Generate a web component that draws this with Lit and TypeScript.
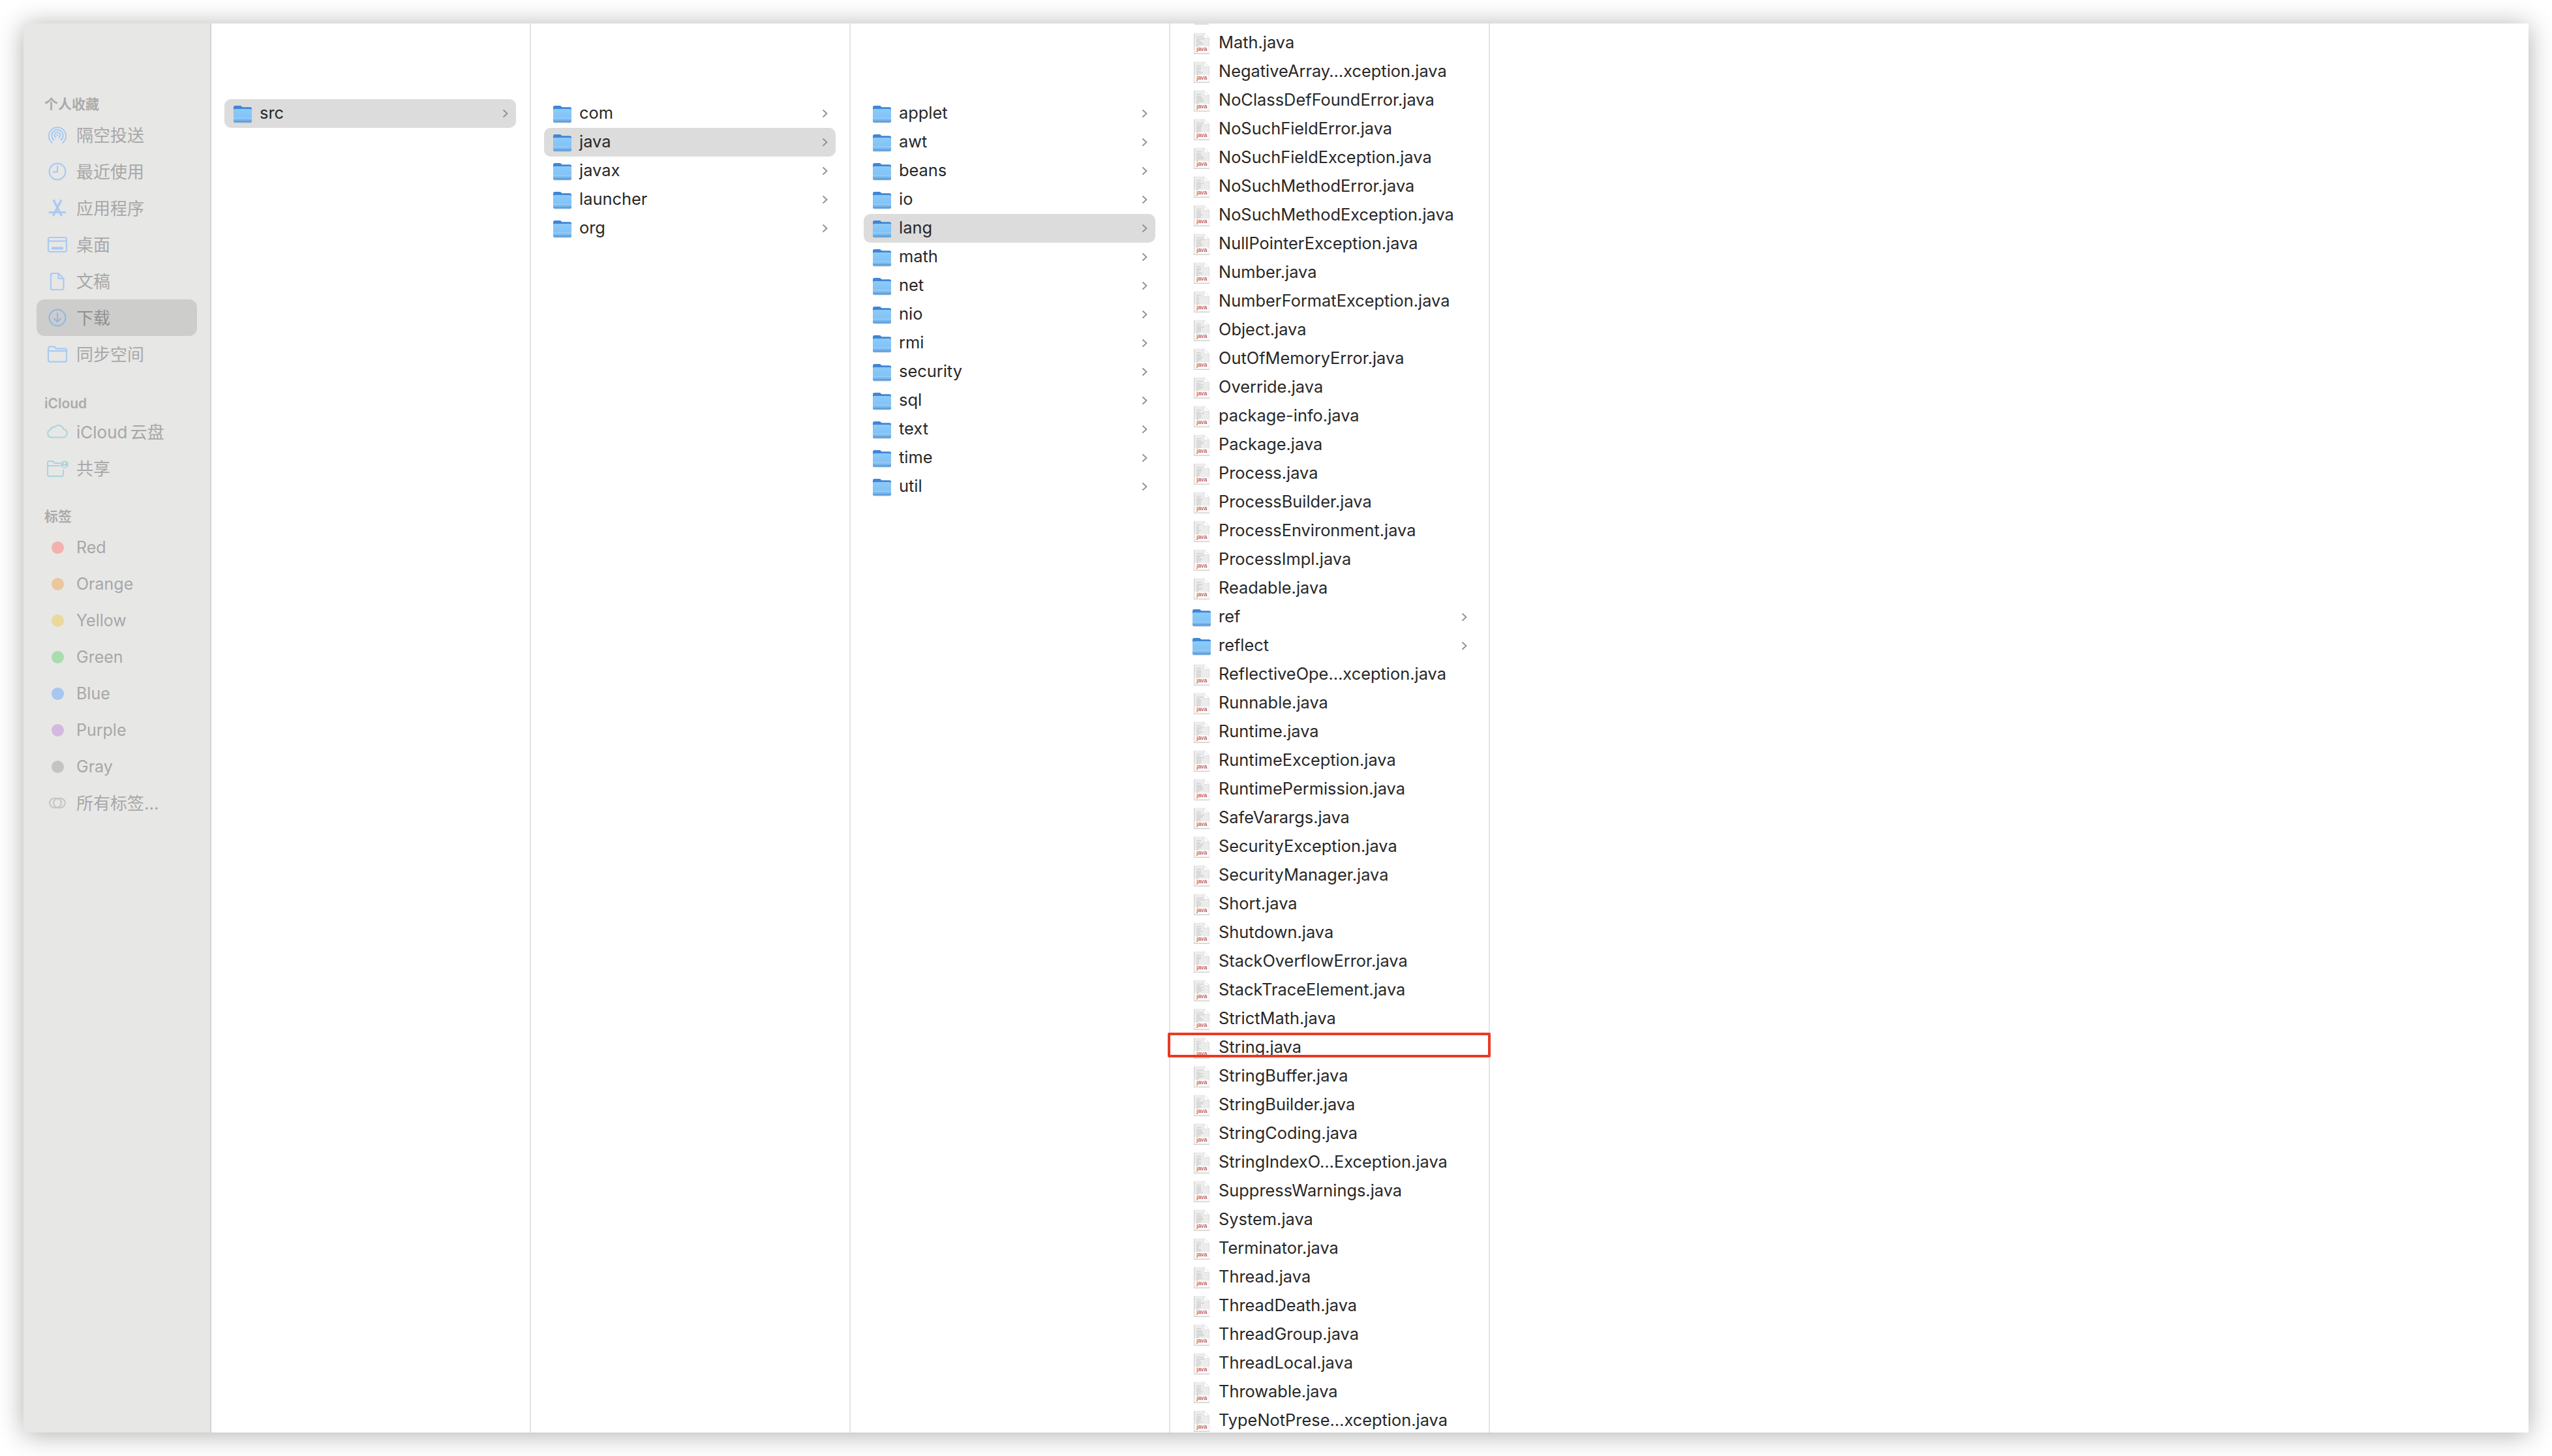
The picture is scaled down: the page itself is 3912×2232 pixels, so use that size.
import { LitElement, html, css, svg } from "lit";
import { customElement } from "lit/decorators.js";

const blue = "#a9caf2";
const teal = "#a9d3df";

const sideIcons: Record<string, unknown> = {
  airdrop: svg`<g fill="none" stroke="currentColor" stroke-linecap="round">
    <path stroke-width="2" d="M10 27 A13.2 13.2 0 1 1 26 27"/>
    <path stroke-width="2" d="M12.6 22.6 A8.7 8.7 0 1 1 23.4 22.6"/>
    <path stroke-width="2" d="M15.4 18.6 A4.4 4.4 0 1 1 20.6 18.6"/>
    <circle cx="18" cy="15" r="1.5" fill="currentColor" stroke="none"/></g>`,
  clock: svg`<g fill="none" stroke="currentColor" stroke-width="2.2" stroke-linecap="round"><circle cx="18" cy="15" r="12.4"/><path d="M18 7v8.6h-6.4"/></g>`,
  apps: svg`<g fill="none" stroke="currentColor" stroke-linecap="round"><path stroke-width="3.4" d="M12.5 3.5 24 26M23.5 3.5 12 26"/><path stroke-width="3" d="M6 21.5h24"/></g>`,
  desktop: svg`<g fill="none" stroke="currentColor"><rect x="4" y="4" width="28" height="22" rx="3" stroke-width="2.2"/><path stroke-width="2.2" d="M4 9.5h28"/></g><rect x="9" y="18.5" width="18" height="4" rx="1" fill="currentColor"/>`,
  doc: svg`<g fill="none" stroke="currentColor" stroke-width="2.2" stroke-linejoin="round"><path d="M8 5a2 2 0 0 1 2-2h9.500l8 8V26a2 2 0 0 1-2 2H10a2 2 0 0 1-2-2z" /><path d="M19.500 3v8h8"/></g>`,
  download: svg`<g fill="none" stroke="currentColor" stroke-width="2.2" stroke-linecap="round" stroke-linejoin="round"><circle cx="18" cy="15" r="12.4"/><path d="M18 8v13M13 16.5l5 5 5-5"/></g>`,
  folder: svg`<g fill="none" stroke="currentColor" stroke-width="2.2" stroke-linejoin="round"><path d="M4 6a2.6 2.6 0 0 1 2.6-2.6h6.6l3 3h13.2A2.6 2.6 0 0 1 32 9v15a2.6 2.6 0 0 1-2.6 2.6H6.6A2.6 2.6 0 0 1 4 24z"/><path d="M4 10h28"/></g>`,
  cloud: svg`<path fill="none" stroke="currentColor" stroke-width="2" d="M9 25.5a6 6 0 0 1-1.600-11.700 A6.500 6.500 0 0 1 14 9.500 A8 8 0 0 1 27.500 13 A6.300 6.300 0 0 1 27 25.500z" transform="translate(0 -2)"/>`,
  shared: svg`<g fill="none" stroke="currentColor" stroke-width="2" stroke-linejoin="round"><path d="M27 17v8a2 2 0 0 1-2 2H5a2 2 0 0 1-2-2V6a2 2 0 0 1 2-2h6l3 3h9"/><path d="M3 11h19"/></g><circle cx="29" cy="9" r="5.800" fill="currentColor"/><circle cx="29" cy="7" r="1.800" fill="#e7e7e6"/><path d="M25.800 13a3.300 3.300 0 0 1 6.400 0z" fill="#e7e7e6"/>`,
  tags: svg`<g fill="none" stroke="#c6c6c6" stroke-width="2.2"><ellipse cx="15" cy="15" rx="9" ry="7.500" /><ellipse cx="21" cy="15" rx="9" ry="7.500"/></g>`,
};

const folderIcon = html`<svg class="ico" width="30" height="30" viewBox="0 0 30 30">
  <defs>
    <linearGradient id="fb" x1="0" y1="0" x2="0" y2="1"><stop offset="0" stop-color="#8ccbfa"/><stop offset="1" stop-color="#7dbdf3"/></linearGradient>
  </defs>
  <rect x="1" y="6" width="28" height="23.500" rx="2.500" fill="#9d9d9d" opacity=".55"/>
  <path d="M1 5.500a2.500 2.500 0 0 1 2.500-2.500h7.500c1 0 1.500.4 2.200 1l1.300 1.200h12a2.500 2.500 0 0 1 2.500 2.500V14H1z" fill="#3f86d4"/>
  <rect x="1" y="8" width="28" height="20.500" rx="2" fill="url(#fb)"/>
  <rect x="1" y="21.500" width="28" height="1" fill="#a3d2f7"/>
  <rect x="1" y="24.500" width="28" height="1" fill="#70aee6"/>
  <path d="M1 26h28v.5a2 2 0 0 1-2 2H3a2 2 0 0 1-2-2z" fill="#5f9fdb"/>
</svg>`;

function fileIcon(name: string) {
  let h = 0;
  for (const c of name) h = (h * 31 + c.charCodeAt(0)) % 997;
  const lines = [5, 8, 10, 12, 14, 16, 18].map((y, i) => {
    const w = 4 + ((h >> i) % 3 === 0 ? 3 : (h * (i + 3)) % 9);
    return svg`<rect x="4" y=${y + 1} width=${w} height="1.300" fill="#d0d0d0"/>`;
  });
  return html`<svg class="ico file" width="24" height="33" viewBox="0 0 24 33">
    <path d="M0 1h15.500L24 9v24H0z" fill="#a5a5a5" opacity=".55"/>
    <path d="M1 .5h14.500L23.500 8.500V31.500H1z" fill="#ececec"/>
    <path d="M1 21h22.500v10.500H1z" fill="#fbfbfb"/>
    <path d="M15.500 .5v8h8z" fill="#fff" stroke="#d6d6d6" stroke-width=".7"/>
    ${lines}
    <text x="12.300" y="28.200" text-anchor="middle" font-family="'Liberation Sans',sans-serif" font-size="8.800" fill="#b42d28">java</text>
  </svg>`;
}

const col1 = ["src"];
const col2 = ["com", "java", "javax", "launcher", "org"];
const col3 = ["applet", "awt", "beans", "io", "lang", "math", "net", "nio", "rmi", "security", "sql", "text", "time", "util"];
const col4 = [
  "Math.java", "NegativeArray…xception.java", "NoClassDefFoundError.java", "NoSuchFieldError.java",
  "NoSuchFieldException.java", "NoSuchMethodError.java", "NoSuchMethodException.java", "NullPointerException.java",
  "Number.java", "NumberFormatException.java", "Object.java", "OutOfMemoryError.java", "Override.java",
  "package-info.java", "Package.java", "Process.java", "ProcessBuilder.java", "ProcessEnvironment.java",
  "ProcessImpl.java", "Readable.java", "ref", "reflect", "ReflectiveOpe…xception.java", "Runnable.java",
  "Runtime.java", "RuntimeException.java", "RuntimePermission.java", "SafeVarargs.java", "SecurityException.java",
  "SecurityManager.java", "Short.java", "Shutdown.java", "StackOverflowError.java", "StackTraceElement.java",
  "StrictMath.java", "String.java", "StringBuffer.java", "StringBuilder.java", "StringCoding.java",
  "StringIndexO…Exception.java", "SuppressWarnings.java", "System.java", "Terminator.java", "Thread.java",
  "ThreadDeath.java", "ThreadGroup.java", "ThreadLocal.java", "Throwable.java", "TypeNotPrese…xception.java",
];

const fav = [
  ["airdrop", "隔空投送"], ["clock", "最近使用"], ["apps", "应用程序"], ["desktop", "桌面"],
  ["doc", "文稿"], ["download", "下载"], ["folder", "同步空间"],
];
const tags = [
  ["Red", "#f2b1ae"], ["Orange", "#ebc79c"], ["Yellow", "#ebd89b"], ["Green", "#a9dcae"],
  ["Blue", "#a5c7f0"], ["Purple", "#d3b8e0"], ["Gray", "#c4c4c4"],
];

@customElement("app-root")
export class AppRoot extends LitElement {
  static styles = css`
    :host {
      display: block;
      width: 3912px;
      height: 2232px;
      padding: 36px;
      box-sizing: border-box;
      background: #fff;
      font-family: Inter, "Noto Sans CJK SC", sans-serif;
      overflow: hidden;
    }
    .window {
      display: flex;
      width: 3840px;
      height: 2160px;
      background: #fff;
      box-shadow: 0 3px 38px rgba(0, 0, 0, 0.32);
    }
    .sidebar {
      width: 288px;
      flex: none;
      box-sizing: border-box;
      background: #e7e7e6;
      border-right: 2px solid #d2d2d0;
      padding: 110px 0 0 20px;
    }
    .head {
      height: 28px;
      line-height: 28px;
      margin: 0 0 5px 12px;
      font-size: 21px;
      font-weight: 600;
      color: #ababab;
    }
    .head.tight { margin-bottom: 3px; position: relative; top: 2px; }
    .section + .section { margin-top: 32px; }
    .item {
      display: flex;
      align-items: center;
      width: 246px;
      height: 56px;
      box-sizing: border-box;
      padding-left: 14px;
      gap: 11px;
      font-size: 26px;
      word-spacing: -3px;
      color: #a7a7a7;
      border-radius: 12px;
      white-space: nowrap;
    }
    .item.on { background: #cdcdcc; color: #909090; }
    .item svg { flex: none; display: block; }
    .item .lbl { position: relative; top: -2px; }
    .item.tag { font-size: 25px; }
    .item.tag .lbl { top: 0; }
    .dotbox { width: 36px; flex: none; display: flex; justify-content: center; }
    .dot { width: 19px; height: 19px; border-radius: 50%; }
    .col {
      width: 490px;
      height: 2160px;
      flex: none;
      box-sizing: border-box;
      border-right: 2px solid #e4e4e4;
      padding: 116px 0 0 20px;
    }
    .col.scrolled { padding-top: 0; }
    .sliver { width: 22px; height: 2px; margin: 0 0 6px 17px; background: #e2e2e2; }
    .row {
      position: relative;
      display: flex;
      align-items: center;
      width: 447px;
      height: 44px;
      box-sizing: border-box;
      font-size: 25.4px;
      color: #282828;
      border-radius: 10px;
      white-space: nowrap;
    }
    .row.on { background: #dcdcdc; }
    .icoBox { width: 54px; flex: none; display: flex; justify-content: flex-start; padding-left: 13px; box-sizing: border-box; }
    .icoBox.f { padding-left: 16px; }
    .ico { display: block; flex: none; }
    .name { flex: 1; position: relative; top: -2px; }
    .chev { flex: none; margin-right: 12px; display: block; }
    .mark {
      position: absolute;
      left: -24px;
      top: -1px;
      width: 495px;
      height: 38px;
      box-sizing: border-box;
      border: 4px solid #e93a22;
      border-radius: 2px;
    }
  `;

  private sideItem(icon: string, label: string, color: string, on = false) {
    return html`<div class="item ${on ? "on" : ""}">
      <svg width="36" height="30" viewBox="0 0 36 30" style="color:${on ? "#92b8e3" : color}">${sideIcons[icon]}</svg>
      <span class="lbl">${label}</span>
    </div>`;
  }

  private row(name: string, folder: boolean, on = false) {
    return html`<div class="row ${on ? "on" : ""}">
      <div class="icoBox ${folder ? "" : "f"}">${folder ? folderIcon : fileIcon(name)}</div>
      <span class="name">${name}</span>
      ${folder
        ? html`<svg class="chev" width="9" height="14" viewBox="0 0 9 14"><path d="M1.500 1.500 7.500 7l-6 5.500" fill="none" stroke="#8c8c8c" stroke-width="1.700"/></svg>`
        : null}
      ${name === "String.java" ? html`<div class="mark"></div>` : null}
    </div>`;
  }

  render() {
    return html`<div class="window">
      <aside class="sidebar">
        <div class="section">
          <div class="head">个人收藏</div>
          ${fav.map(([i, l]) => this.sideItem(i, l, blue, l === "下载"))}
        </div>
        <div class="section">
          <div class="head tight">iCloud</div>
          ${this.sideItem("cloud", "iCloud 云盘", teal)}
          ${this.sideItem("shared", "共享", teal)}
        </div>
        <div class="section">
          <div class="head">标签</div>
          ${tags.map(
            ([l, c]) => html`<div class="item tag"><div class="dotbox"><div class="dot" style="background:${c}"></div></div><span class="lbl">${l}</span></div>`,
          )}
          ${this.sideItem("tags", "所有标签...", blue)}
        </div>
      </aside>
      <div class="col">${col1.map((n) => this.row(n, true, true))}</div>
      <div class="col">${col2.map((n) => this.row(n, true, n === "java"))}</div>
      <div class="col">${col3.map((n) => this.row(n, true, n === "lang"))}</div>
      <div class="col scrolled">
        <div class="sliver"></div>
        ${col4.map((n) => this.row(n, !n.endsWith(".java")))}
      </div>
    </div>`;
  }
}
